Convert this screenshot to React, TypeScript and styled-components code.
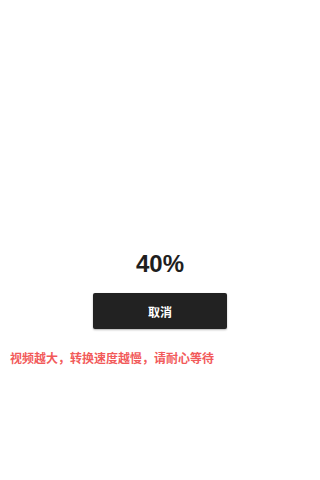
import styled, { createGlobalStyle } from 'styled-components';

const GlobalStyle = createGlobalStyle`
  html, body {
    margin: 0;
    padding: 0;
    background: #fff;
    font-family: "Liberation Sans", "Noto Sans CJK SC", sans-serif;
  }
`;

const StyledWrapper = styled.div`
  display: flex;
  flex-direction: column;
  width: 320px;
  height: 480px;
  padding-top: 251px;
  box-sizing: border-box;
`;

const StyledPercent = styled.div`
  text-align: center;
  font-size: 24px;
  line-height: 26px;
  font-weight: bold;
  color: #1e1e1e;
`;

const StyledButton = styled.button`
  align-self: center;
  width: 134px;
  height: 36px;
  margin-top: 16px;
  border: none;
  border-radius: 2px;
  background: #222;
  box-shadow: 0 1px 2px rgba(0, 0, 0, 0.3);
  color: #fff;
  font-family: "Noto Sans CJK SC", sans-serif;
  font-size: 12px;
  font-weight: bold;
  cursor: pointer;
`;

const StyledTip = styled.div`
  margin-top: 21px;
  padding-left: 10px;
  font-family: "Noto Sans CJK SC", sans-serif;
  font-size: 12px;
  line-height: 16px;
  font-weight: bold;
  color: #f25a5a;
`;

const App = () => {
  return (
    <>
      <GlobalStyle />
      <StyledWrapper>
        <StyledPercent>40%</StyledPercent>
        <StyledButton>取消</StyledButton>
        <StyledTip>视频越大，转换速度越慢，请耐心等待</StyledTip>
      </StyledWrapper>
    </>
  );
};

export default App;
